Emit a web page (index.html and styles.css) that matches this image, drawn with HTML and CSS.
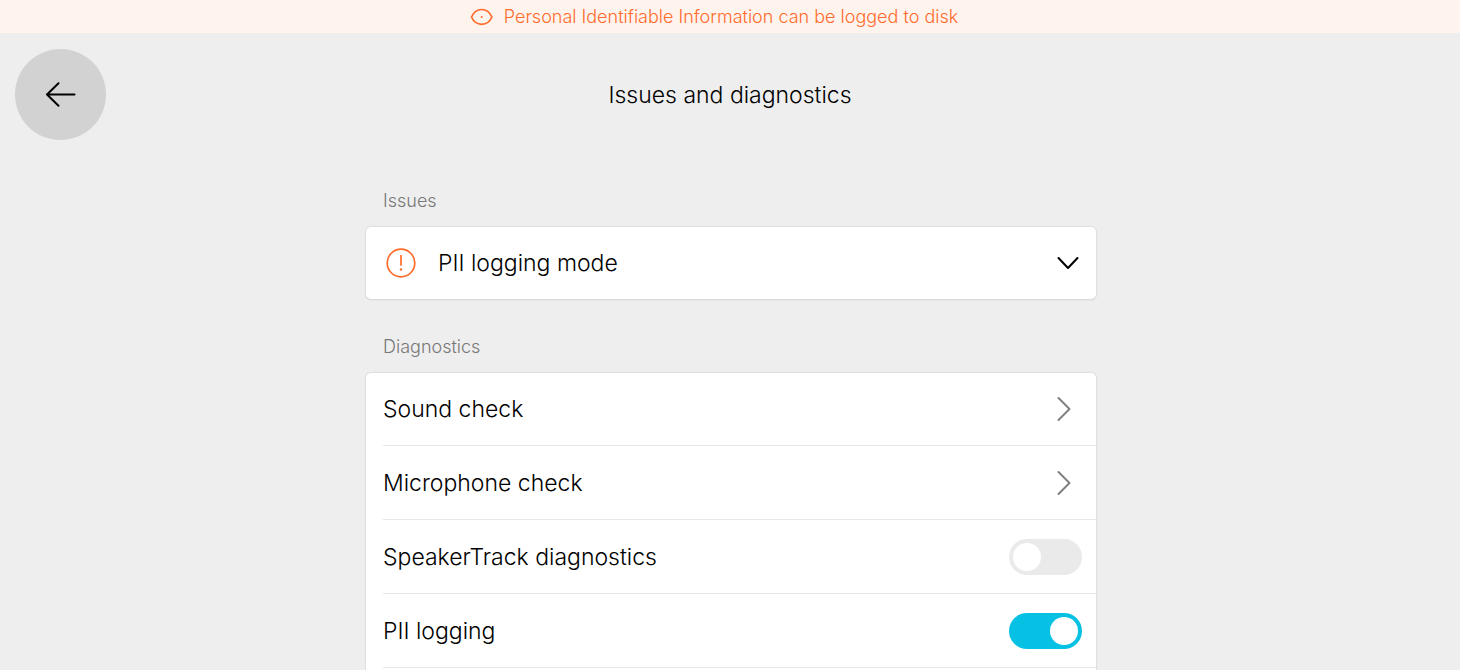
FILE: index.html
```html
<!DOCTYPE html>
<html lang="en">
<head>
<meta charset="utf-8">
<meta name="viewport" content="width=device-width, initial-scale=1">
<title>Issues and diagnostics</title>
<link rel="stylesheet" href="styles.css">
</head>
<body>
<div class="banner" role="status">
  <svg class="banner-icon" width="24" height="18" viewBox="0 0 24 18" fill="none" stroke="currentColor" stroke-width="1.7" aria-hidden="true">
    <path d="M1.500 9C3.600 4.200 7.600 1.500 11.700 1.500S19.800 4.200 21.900 9C19.800 13.800 15.800 16.300 11.700 16.300S3.600 13.800 1.500 9Z" stroke-linejoin="round"/>
    <circle cx="11.700" cy="9" r="1" fill="currentColor" stroke="none"/>
  </svg>
  <span>Personal Identifiable Information can be logged to disk</span>
</div>
<header class="header">
  <button class="back" type="button" aria-label="Back">
    <svg width="32" height="26" viewBox="0 0 32 26" fill="none" stroke="currentColor" stroke-width="2" stroke-linecap="round" stroke-linejoin="round" aria-hidden="true">
      <path d="M29.500 12.500H2M13.500 1.300 2 12.500l11.500 11.300"/>
    </svg>
  </button>
  <h1 class="title">Issues and diagnostics</h1>
</header>
<main class="content">
  <h2 class="section-label">Issues</h2>
  <section class="card">
    <button class="row issue" type="button" aria-expanded="false">
      <svg class="warn" width="30" height="30" viewBox="0 0 30 30" fill="none" stroke="currentColor" stroke-width="1.700" aria-hidden="true">
        <circle cx="15" cy="15" r="13.800"/>
        <path d="M15 7.500v9.500" stroke-linecap="round"/>
        <circle cx="15" cy="21.500" r="1.200" fill="currentColor" stroke="none"/>
      </svg>
      <span class="row-text">PII logging mode</span>
      <svg class="chevron-down" width="22" height="14" viewBox="0 0 22 14" fill="none" stroke="currentColor" stroke-width="2" stroke-linecap="round" stroke-linejoin="round" aria-hidden="true">
        <path d="M1.500 2 11 12l9.500-10"/>
      </svg>
    </button>
  </section>
  <h2 class="section-label">Diagnostics</h2>
  <section class="card card-open">
    <button class="row row-first" type="button">
      <span class="row-text">Sound check</span>
      <svg class="chevron-right" width="14" height="26" viewBox="0 0 14 26" fill="none" stroke="currentColor" stroke-width="2" stroke-linecap="round" stroke-linejoin="round" aria-hidden="true">
        <path d="M1.500 2 12.500 13l-11 11"/>
      </svg>
    </button>
    <button class="row" type="button">
      <span class="row-text">Microphone check</span>
      <svg class="chevron-right" width="14" height="26" viewBox="0 0 14 26" fill="none" stroke="currentColor" stroke-width="2" stroke-linecap="round" stroke-linejoin="round" aria-hidden="true">
        <path d="M1.500 2 12.500 13l-11 11"/>
      </svg>
    </button>
    <label class="row">
      <span class="row-text">SpeakerTrack diagnostics</span>
      <input class="switch" type="checkbox" role="switch">
    </label>
    <label class="row">
      <span class="row-text">PII logging</span>
      <input class="switch" type="checkbox" role="switch" checked>
    </label>
  </section>
</main>
</body>
</html>
```
FILE: styles.css
```css
* {
  box-sizing: border-box;
}

body {
  margin: 0;
  height: 100vh;
  overflow: hidden;
  display: flex;
  flex-direction: column;
  background: #eeeeee;
  color: #000;
  font-family: Inter, "Liberation Sans", sans-serif;
  font-weight: 300;
}

.banner {
  display: flex;
  align-items: center;
  justify-content: center;
  gap: 10px;
  height: 33px;
  padding-right: 32px;
  flex: none;
  background: #fff3ee;
  color: #ff6b2b;
  font-size: 18px;
  line-height: 24px;
}

.header {
  display: grid;
  grid-template-columns: 1fr auto 1fr;
  align-items: center;
  padding: 16px 15px 0;
  flex: none;
}

.back {
  display: flex;
  align-items: center;
  justify-content: center;
  width: 91px;
  height: 91px;
  padding: 0;
  border: 0;
  border-radius: 50%;
  background: #d2d2d2;
  color: #000;
}

.title {
  margin: 0;
  font-size: 23px;
  font-weight: 300;
  line-height: 32px;
}

.content {
  display: flex;
  flex-direction: column;
  flex: 1;
  width: 100%;
  max-width: 732px;
  margin: 0 auto;
  padding: 49px 0 0 2px;
}

.section-label {
  margin: 0;
  padding: 0 17px;
  color: #777;
  font-size: 18px;
  font-weight: 300;
  line-height: 24px;
}

.card {
  display: flex;
  flex-direction: column;
  margin: 14px 0 36px;
  border-radius: 5px;
  background: #fff;
  box-shadow: 0 0 1px 1px #dedede, 0 1px 1px #b8b8b8;
}

.card-open {
  flex: 1;
  margin-bottom: 0;
  border-radius: 5px 5px 0 0;
  box-shadow: 0 0 1px 1px #dedede;
}

.row {
  display: flex;
  align-items: center;
  justify-content: space-between;
  height: 74px;
  margin-left: 17px;
  padding: 0 25px 0 0;
  border: 0;
  border-bottom: 1px solid #e8e8e8;
  background: none;
  color: inherit;
  font: inherit;
  font-size: 23px;
  line-height: 32px;
  text-align: left;
}

.row-first {
  height: 73px;
}

.issue {
  height: 72px;
  padding: 0 17px 0 3px;
  border-bottom: 0;
  gap: 22px;
}

.issue .row-text {
  flex: 1;
}

.warn {
  color: #ff6b2b;
}

.chevron-right {
  color: #7f7f7f;
}

.switch {
  appearance: none;
  display: flex;
  width: 73px;
  height: 36px;
  margin: 0 -11px 0 0;
  padding: 4px;
  border-radius: 18px;
  background: #eaeaea;
}

.switch::before {
  content: "";
  width: 28px;
  height: 28px;
  border-radius: 50%;
  background: #fff;
}

.switch:checked {
  justify-content: flex-end;
  background: #07c1e4;
}
```
